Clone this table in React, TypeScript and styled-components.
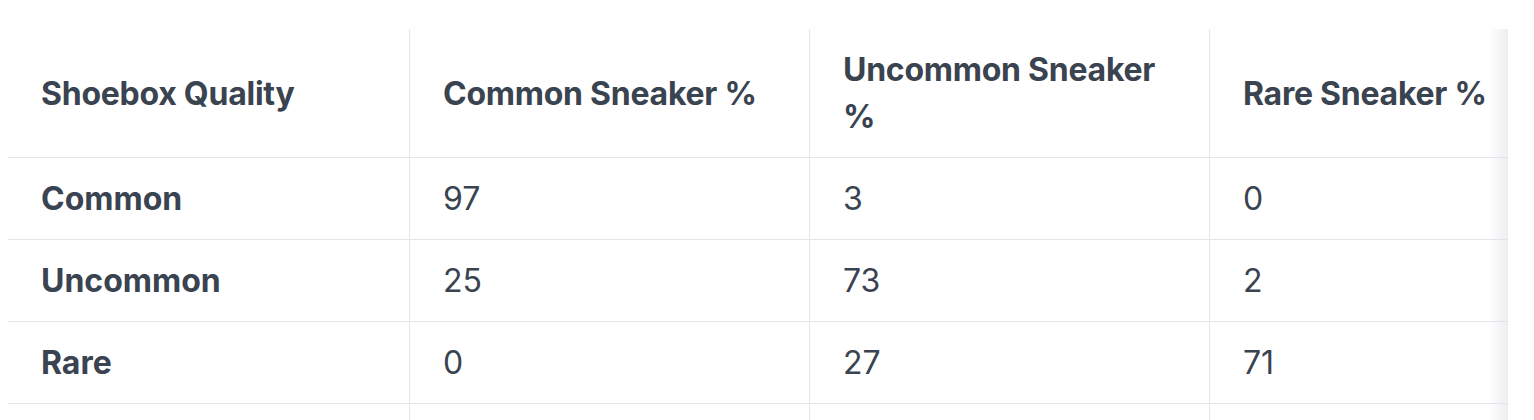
import React from "react";
import styled, { createGlobalStyle } from "styled-components";

const GlobalStyle = createGlobalStyle`
  html, body {
    margin: 0;
    padding: 0;
    background: #ffffff;
  }
  body {
    font-family: Inter, "Noto Sans", "Liberation Sans", sans-serif;
    color: #3a4350;
  }
`;

const Page = styled.div`
  padding: 29px 0 0 8px;
`;

const ScrollFrame = styled.div`
  position: relative;
  width: 1500px;
  overflow: hidden;
`;

const RightShadow = styled.div`
  position: absolute;
  top: 0;
  right: 0;
  bottom: 0;
  width: 20px;
  pointer-events: none;
  background: linear-gradient(
    to right,
    rgba(222, 224, 229, 0) 0%,
    rgba(222, 224, 229, 0.3) 55%,
    rgba(222, 224, 229, 0.55) 100%
  );
`;

const Table = styled.table`
  border-collapse: separate;
  border-spacing: 0;
  table-layout: fixed;
  width: 1601px;
`;

const HeadCell = styled.th<{ $first?: boolean }>`
  box-sizing: border-box;
  width: ${(p) => (p.$first ? "401px" : "400px")};
  height: 129px;
  padding: 17px 30px 17px 33px;
  text-align: left;
  vertical-align: middle;
  font-size: 32px;
  line-height: 47px;
  letter-spacing: -0.25px;
  font-weight: 700;
  border-bottom: 1px solid #e2e6eb;
  border-left: ${(p) => (p.$first ? "none" : "1px solid #e2e6eb")};
`;

const Cell = styled.td<{ $first?: boolean }>`
  box-sizing: border-box;
  height: 82px;
  padding: 17px 30px 17px 33px;
  vertical-align: middle;
  font-size: 32px;
  line-height: 47px;
  font-weight: ${(p) => (p.$first ? 700 : 400)};
  border-bottom: 1px solid #e2e6eb;
  border-left: ${(p) => (p.$first ? "none" : "1px solid #e2e6eb")};
`;

const headers = [
  "Shoebox Quality",
  "Common Sneaker %",
  "Uncommon Sneaker %",
  "Rare Sneaker %",
];

const rows = [
  ["Common", "97", "3", "0"],
  ["Uncommon", "25", "73", "2"],
  ["Rare", "0", "27", "71"],
  ["", "", "", ""],
];

export default function App() {
  return (
    <>
      <GlobalStyle />
      <Page>
        <ScrollFrame>
          <Table>
            <thead>
              <tr>
                {headers.map((h, i) => (
                  <HeadCell key={h} $first={i === 0}>
                    {h}
                  </HeadCell>
                ))}
              </tr>
            </thead>
            <tbody>
              {rows.map((r, ri) => (
                <tr key={ri}>
                  {r.map((c, i) => (
                    <Cell key={i} $first={i === 0}>
                      {c}
                    </Cell>
                  ))}
                </tr>
              ))}
            </tbody>
          </Table>
          <RightShadow />
        </ScrollFrame>
      </Page>
    </>
  );
}
